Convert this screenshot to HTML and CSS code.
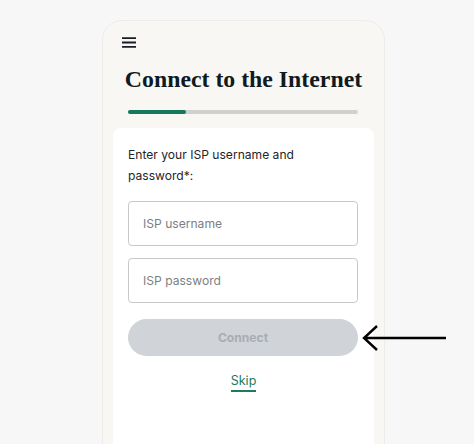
FILE: index.html
```html
<!DOCTYPE html>
<html lang="en">

<head>
    <meta charset="UTF-8">
    <meta name="viewport" content="width=device-width, initial-scale=1.0">
    <title>Connect to the Internet</title>
    <link rel="stylesheet" href="styles.css">
</head>

<body>
    <div class="phone">
        <div class="menu">
            <svg width="14" height="11" viewBox="0 0 14 11">
                <path d="M0 1.2H14M0 5.5H14M0 9.8H14" stroke="#1b1f23" stroke-width="1.8" />
            </svg>
        </div>
        <h1 class="title">Connect to the Internet</h1>
        <div class="progress">
            <div class="progress-fill" style="width: 25%"></div>
        </div>
        <div class="card">
            <p class="prompt">Enter your ISP username and password*:</p>
            <form class="isp-form" action="#">
                <input type="text" class="field" placeholder="ISP username">
                <input type="password" class="field" placeholder="ISP password">
                <div class="connect-row">
                    <button type="submit" class="connect-btn" disabled>Connect</button>
                    <svg class="pointer" width="86" height="28" viewBox="0 0 86 28">
                        <path d="M2 14H84M15 2L2 14L15 26" fill="none" stroke="#000" stroke-width="2.4" />
                    </svg>
                </div>
                <a href="#" class="skip">Skip</a>
            </form>
        </div>
    </div>
</body>

</html>
```

FILE: styles.css
```css
body {
    margin: 0;
    background-color: #f7f7f7;
    font-family: Inter, "Liberation Sans", sans-serif;
    height: 444px;
    overflow: hidden;
}

.phone {
    margin: 20px 0 0 102px;
    width: 283px;
    height: 440px;
    background-color: #f9f7f3;
    border: 1px solid #eeece7;
    border-radius: 20px 20px 0 0;
    display: flex;
    flex-direction: column;
    box-sizing: border-box;
}

.menu {
    padding: 16px 0 0 19px;
    height: 11px;
    line-height: 0;
}

.title {
    margin: 18px 0 0 0;
    text-align: center;
    font-family: "Liberation Serif", serif;
    font-weight: bold;
    font-size: 23.8px;
    line-height: 26px;
    color: #0f1a22;
}

.progress {
    margin: 18px 26px 0 25px;
    height: 3.5px;
    border-radius: 2px;
    background-color: #cfd1d1;
}

.progress-fill {
    height: 100%;
    border-radius: 2px;
    background-color: #16785c;
}

.card {
    margin: 14px 10px 0 10px;
    flex: 1;
    background-color: #fff;
    border-radius: 8px 8px 0 0;
    padding: 16px 15px 0 15px;
}

.prompt {
    margin: 0;
    font-size: 12.1px;
    line-height: 21px;
    color: #1f2428;
    width: 200px;
}

.isp-form {
    margin-top: 15px;
    display: flex;
    flex-direction: column;
    gap: 12px;
}

.field {
    width: 230px;
    height: 45px;
    box-sizing: border-box;
    border: 1px solid #c6c8c9;
    border-radius: 4px;
    padding: 0 14px;
    font-family: inherit;
    font-size: 12.1px;
    color: #222;
}

.field::placeholder {
    color: #7a7f84;
}

.connect-row {
    position: relative;
    margin-top: 4px;
}

.connect-btn {
    width: 230px;
    height: 37px;
    border: none;
    border-radius: 19px;
    background-color: #d0d3d7;
    color: #a9adb2;
    font-family: inherit;
    font-weight: bold;
    font-size: 12.1px;
}

.pointer {
    position: absolute;
    left: 234px;
    top: 5px;
}

.skip {
    align-self: center;
    margin-top: 5px;
    font-size: 12.5px;
    color: #1d7a5e;
    text-decoration: none;
    padding-bottom: 2px;
    border-bottom: 2px solid #1d7a5e;
}
```
